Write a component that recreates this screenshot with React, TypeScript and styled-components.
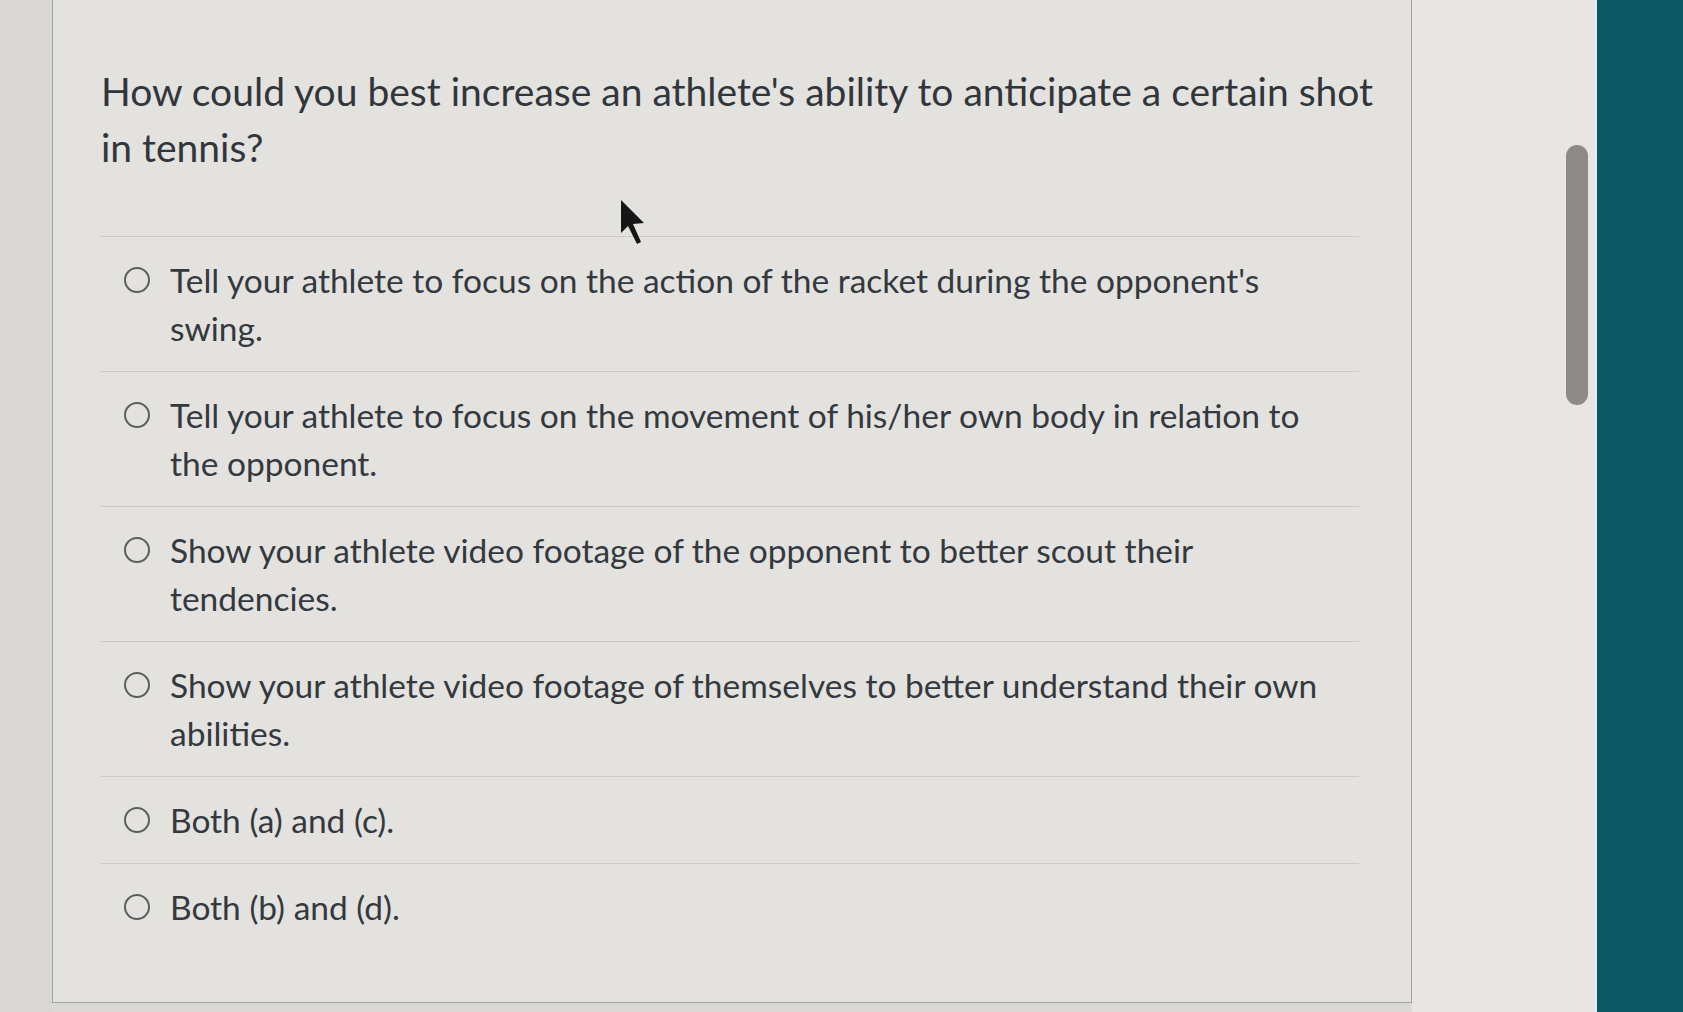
import React from "react";
import styled, { createGlobalStyle } from "styled-components";

const Global = createGlobalStyle`
  html, body {
    margin: 0;
    padding: 0;
    width: 1683px;
    height: 1012px;
    overflow: hidden;
    background: #dad9d5;
  }
  * { box-sizing: border-box; }
`;

const Page = styled.div`
  display: flex;
  width: 1683px;
  height: 1012px;
  background: #dad9d5;
  font-family: Lato, "Open Sans", "Liberation Sans", sans-serif;
  color: #33393f;
  position: relative;
  overflow: hidden;
`;

const Gutter = styled.div`
  width: 52px;
  flex: none;
  background: #d8d7d3;
`;

const Card = styled.div`
  width: 1360px;
  height: 1003px;
  flex: none;
  background: #e3e2de;
  border-left: 1.5px solid #a3a3a0;
  border-right: 1.5px solid #a3a3a0;
  border-bottom: 1.5px solid #a3a3a0;
  padding: 63px 52px 0 48px;
  position: relative;
`;

const Question = styled.h1`
  margin: 0 0 61px 0;
  width: 1285px;
  font-size: 39px;
  font-weight: 400;
  line-height: 56px;
  color: #30363c;
`;

const OptionList = styled.div`
  display: flex;
  flex-direction: column;
`;

const Option = styled.label`
  display: flex;
  align-items: flex-start;
  border-top: 1.5px solid #cbcac6;
  padding: 19px 0 19px 23px;
`;

const Radio = styled.span`
  flex: none;
  width: 26px;
  height: 26px;
  margin-top: 11px;
  margin-right: 20px;
  border-radius: 50%;
  border: 2.5px solid #5b5e61;
  background: transparent;
`;

const OptionText = styled.span`
  font-size: 33.5px;
  line-height: 48px;
  max-width: 1165px;
  color: #33393f;
`;

const ScrollArea = styled.div`
  width: 182px;
  flex: none;
  background: #e7e6e2;
  display: flex;
  justify-content: flex-end;
  align-items: flex-start;
  padding: 145px 6px 0 0;
`;

const Thumb = styled.div`
  width: 22px;
  height: 260px;
  border-radius: 11px;
  background: #8d8b87;
`;

const Teal = styled.div`
  flex: 1;
  background: #0b5763;
  border-left: 3px solid #dfeef2;
`;

const Cursor = styled.svg`
  position: absolute;
  left: 618px;
  top: 198px;
  width: 30px;
  height: 48px;
`;

const options = [
  "Tell your athlete to focus on the action of the racket during the opponent's swing.",
  "Tell your athlete to focus on the movement of his/her own body in relation to the opponent.",
  "Show your athlete video footage of the opponent to better scout their tendencies.",
  "Show your athlete video footage of themselves to better understand their own abilities.",
  "Both (a) and (c).",
  "Both (b) and (d).",
];

export default function App() {
  return (
    <>
      <Global />
      <Page>
        <Gutter />
        <Card>
          <Question>
            How could you best increase an athlete's ability to anticipate a certain shot in tennis?
          </Question>
          <OptionList>
            {options.map((o) => (
              <Option key={o}>
                <Radio />
                <OptionText>{o}</OptionText>
              </Option>
            ))}
          </OptionList>
        </Card>
        <ScrollArea>
          <Thumb />
        </ScrollArea>
        <Teal />
        <Cursor viewBox="0 0 30 48">
          <path d="M3 2 L3 35 L10 28 L19 46 L23 44 L15 26 L26 25 Z" fill="#161616" />
        </Cursor>
      </Page>
    </>
  );
}
